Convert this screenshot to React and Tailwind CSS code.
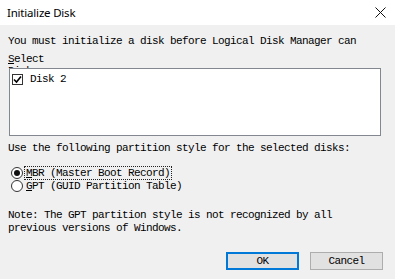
import React from 'react';

const mono = { fontFamily: '"Liberation Mono", "DejaVu Sans Mono", monospace' };

const Radio = ({ checked }) => (
  <svg width="12" height="12" viewBox="0 0 12 12" className="shrink-0">
    <circle cx="6" cy="6" r="5.5" fill="#fff" stroke="#333" strokeWidth="1" />
    {checked && <circle cx="6" cy="6" r="3" fill="#111" />}
  </svg>
);

const App = () => {
  return (
    <div className="w-[395px] h-[279px] bg-[#f0f0f0] overflow-hidden text-black">
      {/* Title bar */}
      <div className="h-[25px] bg-white flex items-center pl-[7px] pr-[9px]">
        <span className="text-[11.5px] tracking-[-0.2px]" style={{ fontFamily: '"Noto Sans", sans-serif' }}>
          Initialize Disk
        </span>
        <svg width="11" height="11" viewBox="0 0 11 11" className="ml-auto">
          <path d="M0.5 0.5 L10.5 10.5 M10.5 0.5 L0.5 10.5" stroke="#111" strokeWidth="1" />
        </svg>
      </div>

      {/* Body */}
      <div className="pl-[8px] text-[11px] tracking-[-0.6px]" style={mono}>
        <div className="mt-[10px] leading-[13px] h-[13px] whitespace-nowrap">
          You must initialize a disk before Logical Disk Manager can
        </div>
        <div className="mt-[5px] h-[15px] overflow-hidden leading-[12px]">
          <div><span className="underline">S</span>elect</div>
          <div>Disks:</div>
        </div>
        <div className="ml-[1px] w-[372px] h-[68px] bg-white border border-[#828790] pt-[4px] pl-[2px]">
          <div className="flex items-center gap-[7px] h-[12px]">
            <div className="w-[11px] h-[11px] border border-[#333] bg-white flex items-center justify-center">
              <svg width="9" height="9" viewBox="0 0 9 9">
                <path d="M1 4.5 L3.5 7 L8 1.5" fill="none" stroke="#000" strokeWidth="1.6" />
              </svg>
            </div>
            <span className="leading-[12px]">Disk 2</span>
          </div>
        </div>

        <div className="mt-[6px] leading-[13px] h-[13px] whitespace-nowrap">
          Use the following partition style for the selected disks:
        </div>
        <div className="mt-[11px] flex items-center gap-[1px] h-[13px] pl-[3px]">
          <Radio checked />
          <span className="leading-[12px] border border-dotted border-[#222] px-[1px]">
            <span className="underline">M</span>BR (Master Boot Record)
          </span>
        </div>
        <div className="flex items-center gap-[2px] h-[13px] pl-[3px]">
          <Radio />
          <span className="leading-[12px] pl-[1px]">
            <span className="underline">G</span>PT (GUID Partition Table)
          </span>
        </div>

        <div className="mt-[17px] leading-[13px] whitespace-nowrap">
          <div>Note: The GPT partition style is not recognized by all</div>
          <div>previous versions of Windows.</div>
        </div>

        <div className="mt-[17px] flex pl-[218px] gap-[11px]">
          <button className="w-[73px] h-[18px] bg-[#e1e1e1] border-2 border-[#0078d7] leading-[14px] text-[11px]" style={mono}>
            OK
          </button>
          <button className="w-[73px] h-[18px] bg-[#e1e1e1] border border-[#adadad] leading-[16px] text-[11px]" style={mono}>
            Cancel
          </button>
        </div>
      </div>
    </div>
  );
};

export default App;
